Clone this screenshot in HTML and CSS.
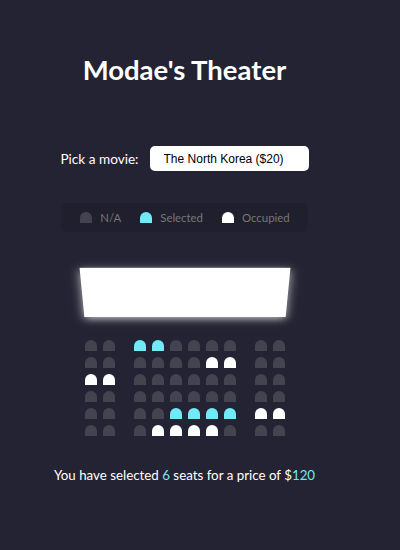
FILE: index.html
```html
<!DOCTYPE html>
<html lang="en">
<head>
<meta charset="utf-8">
<title>Modae's Theater</title>
<link rel="stylesheet" href="styles.css">
</head>
<body>
  <h1 class="title">Modae's Theater</h1>

  <div class="movie">
    <label class="movie-label" for="movie">Pick a movie:</label>
    <select class="movie-select" id="movie">
      <option>The North Korea ($20)</option>
    </select>
  </div>

  <ul class="legend">
    <li class="legend-item"><span class="seat seat-icon"></span><small>N/A</small></li>
    <li class="legend-item"><span class="seat seat-icon selected"></span><small>Selected</small></li>
    <li class="legend-item"><span class="seat seat-icon occupied"></span><small>Occupied</small></li>
  </ul>

  <div class="theater">
    <div class="screen"></div>
    <div class="row">
      <span class="seat"></span><span class="seat"></span><span class="seat selected"></span><span class="seat selected"></span><span class="seat"></span><span class="seat"></span><span class="seat"></span><span class="seat"></span><span class="seat"></span><span class="seat"></span>
    </div>
    <div class="row">
      <span class="seat"></span><span class="seat"></span><span class="seat"></span><span class="seat"></span><span class="seat"></span><span class="seat"></span><span class="seat occupied"></span><span class="seat occupied"></span><span class="seat"></span><span class="seat"></span>
    </div>
    <div class="row">
      <span class="seat occupied"></span><span class="seat occupied"></span><span class="seat"></span><span class="seat"></span><span class="seat"></span><span class="seat"></span><span class="seat"></span><span class="seat"></span><span class="seat"></span><span class="seat"></span>
    </div>
    <div class="row">
      <span class="seat"></span><span class="seat"></span><span class="seat"></span><span class="seat"></span><span class="seat"></span><span class="seat"></span><span class="seat"></span><span class="seat"></span><span class="seat"></span><span class="seat"></span>
    </div>
    <div class="row">
      <span class="seat"></span><span class="seat"></span><span class="seat"></span><span class="seat"></span><span class="seat selected"></span><span class="seat selected"></span><span class="seat selected"></span><span class="seat selected"></span><span class="seat occupied"></span><span class="seat occupied"></span>
    </div>
    <div class="row">
      <span class="seat"></span><span class="seat"></span><span class="seat"></span><span class="seat occupied"></span><span class="seat occupied"></span><span class="seat occupied"></span><span class="seat occupied"></span><span class="seat"></span><span class="seat"></span><span class="seat"></span>
    </div>
  </div>

  <p class="summary">You have selected <span class="hl">6</span> seats for a price of $<span class="hl">120</span></p>
</body>
</html>
```

FILE: styles.css
```css
html {
  background: #242333;
}

body {
  margin: 0;
  width: 369px;
  min-height: 550px;
  background: #242333;
  color: #fff;
  font-family: Lato, "Open Sans", sans-serif;
  font-size: 14px;
  display: flex;
  flex-direction: column;
  align-items: center;
}

.title {
  margin: 51px 0 0;
  font-size: 27.5px;
  line-height: 38px;
  font-weight: 700;
}

.movie {
  margin-top: 57px;
  display: flex;
  align-items: center;
}

.movie-label {
  font-size: 13.6px;
}

.movie-select {
  appearance: none;
  -webkit-appearance: none;
  margin-left: 11px;
  width: 159px;
  height: 25px;
  box-sizing: border-box;
  padding: 0 14px;
  border: 0;
  border-radius: 5px;
  background: #fff;
  color: #000;
  font-family: "Liberation Sans", Arial, sans-serif;
  font-size: 12px;
}

.legend {
  list-style: none;
  margin: 32px 0 0;
  padding: 0 18px 0 19px;
  height: 29px;
  box-sizing: border-box;
  background: rgba(0, 0, 0, 0.1);
  border-radius: 5px;
  display: flex;
  align-items: center;
  gap: 19px;
  color: #777;
}

.legend-item {
  display: flex;
  align-items: center;
  gap: 8px;
}

.legend-item small {
  font-size: 11.4px;
}

.seat {
  display: block;
  width: 12px;
  height: 11px;
  margin: 3px;
  background: #444451;
  border-top-left-radius: 10px;
  border-top-right-radius: 10px;
}

.seat.selected {
  background: #6feaf6;
}

.seat.occupied {
  background: #fff;
}

.seat-icon {
  margin: 0;
}

.theater {
  margin-top: 28px;
  perspective: 1000px;
}

.screen {
  height: 66px;
  margin-bottom: 11px;
  background: #fff;
  transform: rotateX(-45deg);
  box-shadow: 0 3px 10px rgba(255, 255, 255, 0.7);
}

.row {
  display: flex;
}

.row .seat:nth-child(2) {
  margin-right: 16px;
}

.row .seat:nth-last-child(2) {
  margin-left: 16px;
}

.summary {
  margin: 28px 0 0;
  font-size: 13.33px;
}

.hl {
  color: #6feaf6;
}
```
